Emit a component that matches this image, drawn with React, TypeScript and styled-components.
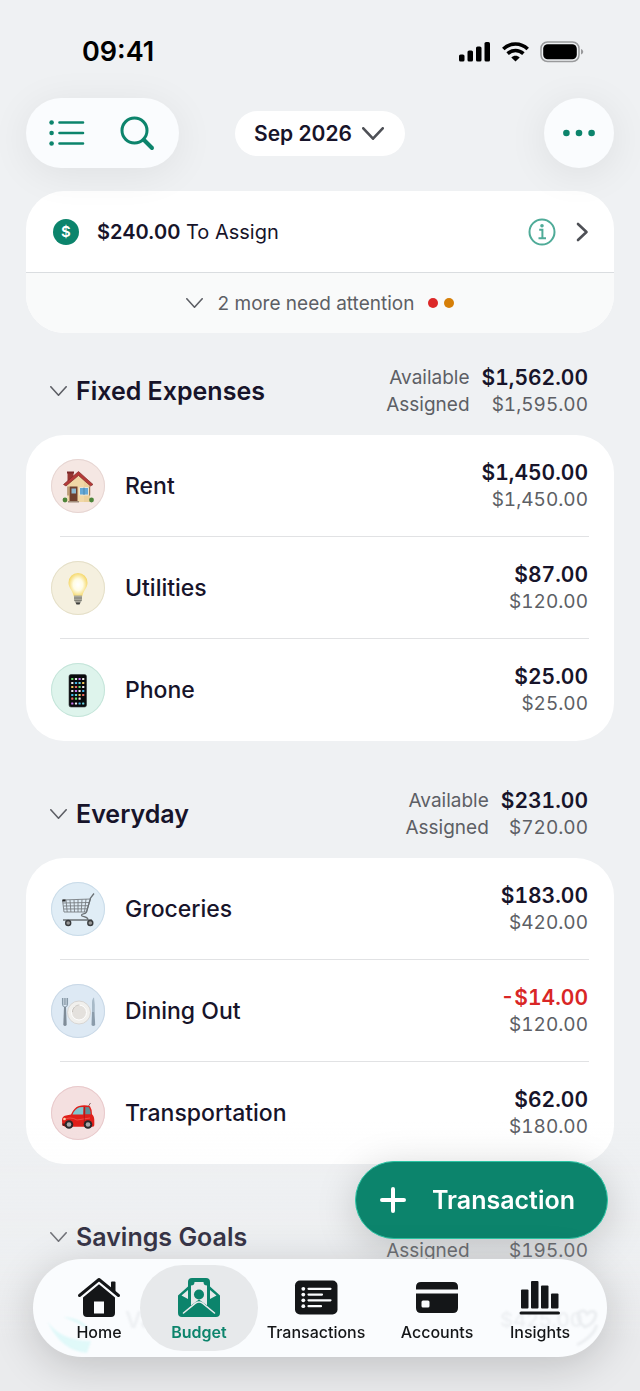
import React, { FC, ReactNode, useState } from "react";
import styled, { createGlobalStyle } from "styled-components";

const GREEN = "#0c846c";
const INK = "#17142a";
const MUTED = "#5d5f65";

const GlobalStyle = createGlobalStyle`
    * {
        box-sizing: border-box;
    }
    body {
        margin: 0;
        background: #eff1f3;
        color: ${INK};
        font-family: Inter, "Liberation Sans", sans-serif;
    }
    button {
        margin: 0;
        padding: 0;
        border: 0;
        background: none;
        color: inherit;
        font: inherit;
        cursor: pointer;
    }
    svg {
        display: block;
        flex: none;
    }
`;

const Page = styled.div`
    min-height: 100vh;
    padding: 0 26px 112px;
    overflow: hidden;
`;

const StatusBar = styled.div`
    display: flex;
    align-items: center;
    justify-content: space-between;
    height: 98px;
    padding: 6px 30px 0 56px;
    color: #000;
    font-size: 27px;
    font-weight: 600;
    line-height: 32px;
`;

const StatusIcons = styled.div`
    display: flex;
    align-items: center;
    gap: 11px;
`;

const Header = styled.header`
    display: grid;
    grid-template-columns: 1fr auto 1fr;
    align-items: center;
`;

const GlassGroup = styled.div`
    display: flex;
    align-items: center;
    justify-content: space-around;
    width: 153px;
    height: 70px;
    padding: 0 6px;
    border-radius: 35px;
    background: #fafcfe;
    color: ${GREEN};
    box-shadow: 0 6px 40px rgba(0, 0, 0, 0.07);
`;

const IconButton = styled.button`
    display: grid;
    place-items: center;
    width: 60px;
    height: 60px;
`;

const MoreButton = styled(IconButton)`
    justify-self: end;
    width: 70px;
    height: 70px;
    border-radius: 50%;
    background: #fafcfe;
    color: ${GREEN};
    box-shadow: 0 6px 40px rgba(0, 0, 0, 0.08);
`;

const MonthButton = styled.button`
    display: flex;
    align-items: center;
    gap: 10px;
    height: 45px;
    padding: 0 21px 0 19px;
    border-radius: 23px;
    background: #fff;
    font-size: 21px;
    font-weight: 600;
    & > svg {
        color: #4e5056;
    }
`;

const Banner = styled.section`
    margin-top: 23px;
    border-radius: 38px;
    background: #fff;
    overflow: hidden;
`;

const AssignRow = styled.div`
    display: flex;
    align-items: center;
    height: 82px;
    padding: 0 25px 0 27px;
    border-bottom: 1px solid #dadde0;
    font-size: 20px;
    & > p {
        flex: 1;
        margin: 0 0 0 18px;
    }
    & b {
        font-weight: 600;
    }
`;

const Coin = styled.span`
    display: grid;
    place-items: center;
    width: 26px;
    height: 26px;
    border-radius: 50%;
    background: ${GREEN};
    color: #fff;
    font-size: 15px;
    font-weight: 600;
`;

const AssignActions = styled.div`
    display: flex;
    align-items: center;
    gap: 20px;
`;

const AttentionButton = styled.button`
    display: flex;
    align-items: center;
    justify-content: center;
    width: 100%;
    height: 60px;
    background: #f9fafa;
    color: ${MUTED};
    font-size: 19px;
    & > span {
        margin: 0 14px 0 15px;
    }
`;

const Dot = styled.i<{ $color: string }>`
    width: 10px;
    height: 10px;
    margin-right: 6px;
    border-radius: 50%;
    background: ${(p) => p.$color};
    &:last-child {
        margin-right: 0;
    }
`;

const Group = styled.section`
    margin-top: 46px;
    &:first-of-type {
        margin-top: 31px;
    }
`;

const GroupHeader = styled.div`
    display: flex;
    align-items: center;
    justify-content: space-between;
    padding: 0 26px 0 24px;
`;

const GroupToggle = styled.button`
    display: flex;
    align-items: center;
    gap: 9px;
    & > svg {
        color: ${MUTED};
    }
`;

const GroupTitle = styled.span`
    font-size: 25px;
    font-weight: 600;
    line-height: 32px;
`;

const Totals = styled.dl`
    display: grid;
    grid-template-columns: auto auto;
    grid-auto-rows: 27px;
    column-gap: 12px;
    margin: 0;
    color: ${MUTED};
    font-size: 19px;
    line-height: 27px;
    text-align: right;
    & dd {
        margin: 0;
        font-variant-numeric: tabular-nums;
    }
`;

const Amount = styled.span<{ $negative?: boolean }>`
    display: block;
    color: ${(p) => (p.$negative ? "#d92626" : INK)};
    font-size: 21px;
    font-weight: 600;
`;

const CategoryList = styled.ul`
    margin: 17px 0 0;
    padding: 0;
    border-radius: 38px;
    background: #fff;
    list-style: none;
`;

const CategoryRow = styled.li`
    display: flex;
    align-items: center;
    height: 102px;
    padding: 0 26px 0 25px;
    &:not(:last-child) {
        background: linear-gradient(#e1e2e4, #e1e2e4) right 25px bottom / calc(100% - 59px) 1px no-repeat;
    }
`;

const Badge = styled.span<{ $fill: string; $edge: string }>`
    width: 54px;
    height: 54px;
    border-radius: 50%;
    background: ${(p) => p.$fill};
    box-shadow: inset 0 0 0 1px ${(p) => p.$edge};
`;

const CategoryName = styled.span`
    flex: 1;
    margin-left: 20px;
    font-size: 23px;
    font-weight: 500;
`;

const Money = styled.div`
    display: flex;
    flex-direction: column;
    align-items: flex-end;
    color: ${MUTED};
    font-size: 19px;
    font-variant-numeric: tabular-nums;
    line-height: 27px;
`;

const Veil = styled.div`
    position: fixed;
    inset: auto 0 0;
    height: 270px;
    background: linear-gradient(rgba(234, 235, 237, 0), rgba(233, 234, 236, 0.18) 50%, #eaebed 80%);
    pointer-events: none;
`;

const AddButton = styled.button`
    position: fixed;
    right: 32px;
    bottom: 152px;
    display: flex;
    align-items: center;
    gap: 26px;
    height: 78px;
    padding: 0 32px 0 24px;
    border: 1px solid #2cc4a4;
    border-radius: 39px;
    background: ${GREEN};
    box-shadow: 0 8px 40px rgba(0, 0, 0, 0.18);
    color: #fff;
    font-size: 25px;
    font-weight: 600;
`;

const TabBar = styled.nav`
    position: fixed;
    inset: auto 33px 34px;
    display: flex;
    align-items: center;
    height: 98px;
    padding: 0 27px 0 25px;
    border-radius: 49px;
    background: #fafcfe;
    box-shadow: 0 8px 44px rgba(0, 0, 0, 0.19);
    overflow: hidden;
`;

const Tab = styled.button<{ $grow: number; $active?: boolean }>`
    position: relative;
    display: flex;
    flex: ${(p) => p.$grow} 1 0;
    flex-direction: column;
    align-items: center;
    gap: 2px;
    min-width: 0;
    height: 86px;
    padding-top: 11px;
    border-radius: 43px;
    background: ${(p) => (p.$active ? "#e7e9eb" : "none")};
    color: ${(p) => (p.$active ? GREEN : "#141618")};
    font-size: 16px;
    font-weight: ${(p) => (p.$active ? 600 : 500)};
    line-height: 24px;
`;

/* row scrolled beneath the tab bar, seen through the glass */
const Underlay = styled.div`
    position: absolute;
    inset: 46px 8px 0 12px;
    display: flex;
    align-items: flex-start;
    color: #8a8f98;
    font-size: 20px;
    font-weight: 600;
    line-height: 30px;
    opacity: 0.1;
    filter: blur(1px);
    & > span {
        flex: 1;
        margin-left: 28px;
        font-size: 23px;
    }
    & > svg:first-child {
        margin-top: 12px;
    }
    & > svg:last-child {
        margin-left: -8px;
    }
`;

type ChevronProps = { width: number; height: number; stroke?: number };

const ChevronDown: FC<ChevronProps> = ({ width, height, stroke = 2 }) => (
    <svg width={width} height={height} viewBox={`0 0 ${width} ${height}`} fill="none" stroke="currentColor" strokeWidth={stroke} strokeLinecap="round" strokeLinejoin="round">
        <path d={`M${stroke / 2} ${stroke / 2}L${width / 2} ${height - stroke / 2}L${width - stroke / 2} ${stroke / 2}`} />
    </svg>
);

const SignalIcon = () => (
    <svg width="32" height="20" viewBox="0 0 32 20">
        <rect x="0" y="12.5" width="5.5" height="7" rx="1.6" />
        <rect x="8.5" y="8.5" width="5.5" height="11" rx="1.6" />
        <rect x="17" y="4.5" width="5.5" height="15" rx="1.6" />
        <rect x="25.5" y="0" width="5.5" height="19.5" rx="1.6" />
    </svg>
);

const WifiIcon = () => (
    <svg width="27" height="20" viewBox="0 0 27 20" fill="none" stroke="#000" strokeWidth="3.6">
        <path d="M1.3 7C8.2 .3 18.8 .3 25.700 7" />
        <path d="M5.600 11.700C10.200 7.500 16.800 7.500 21.400 11.700" />
        <path d="M13.500 19.500L9.300 15.500C11.700 13.300 15.300 13.300 17.700 15.500Z" fill="#000" stroke="none" />
    </svg>
);

const BatteryIcon = () => (
    <svg width="44" height="22" viewBox="0 0 44 22">
        <rect x="1" y="1" width="38" height="19.5" rx="6.5" fill="none" stroke="#999a9c" strokeWidth="1.5" />
        <rect x="3.2" y="3.3" width="33.6" height="15" rx="4.5" />
        <path d="M41 8v5.6c1.3-.5 2.2-1.500 2.200-2.800S42.300 8.500 41 8z" fill="#999a9c" />
    </svg>
);

const ListIcon = () => (
    <svg width="36" height="26" viewBox="0 0 36 26" fill="none" stroke="currentColor" strokeWidth="2.6" strokeLinecap="round">
        <path d="M10.500 2.500h23.500M10.500 13h23.500M10.500 23.500h23.500" />
        <g fill="currentColor" stroke="none">
            <circle cx="2.600" cy="2.500" r="2.300" />
            <circle cx="2.600" cy="13" r="2.300" />
            <circle cx="2.600" cy="23.500" r="2.300" />
        </g>
    </svg>
);

const SearchIcon = () => (
    <svg width="35" height="35" viewBox="0 0 35 35" fill="none" stroke="currentColor" strokeLinecap="round">
        <circle cx="14.500" cy="14.500" r="12.500" strokeWidth="3" />
        <path d="M24 24l8 8" strokeWidth="4" />
    </svg>
);

const MoreIcon = () => (
    <svg width="32" height="8" viewBox="0 0 32 8" fill="currentColor">
        <circle cx="3.400" cy="4" r="3.300" />
        <circle cx="16" cy="4" r="3.300" />
        <circle cx="28.600" cy="4" r="3.300" />
    </svg>
);

const InfoIcon = () => (
    <svg width="28" height="28" viewBox="0 0 28 28" fill="none" stroke="#4fab98" strokeWidth="2">
        <circle cx="14" cy="14" r="12.500" />
        <path d="M11.200 11.800h3.200v8M10.500 20.300h7.500" />
        <circle cx="14" cy="7.800" r="1.800" fill="#4fab98" stroke="none" />
    </svg>
);

const ChevronRight = () => (
    <svg width="13" height="20" viewBox="0 0 13 20" fill="none" stroke="#4e5056" strokeWidth="2.600" strokeLinecap="round" strokeLinejoin="round">
        <path d="M2 2l8.500 8L2 18" />
    </svg>
);

const PlusIcon = () => (
    <svg width="26" height="26" viewBox="0 0 26 26" fill="none" stroke="currentColor" strokeWidth="4" strokeLinecap="round">
        <path d="M13 2v22M2 13h22" />
    </svg>
);

const HouseEmoji = () => (
    <svg width="54" height="54" viewBox="0 0 54 54">
        <path d="M16.500 13h6v9h-6z" fill="#963632" />
        <path d="M16 12.500h7v2h-7z" fill="#7a2829" />
        <path d="M16.500 25L27.500 15L39 25v18h-22.500z" fill="#f1d7a6" />
        <path d="M33 22l6 4v17h-6z" fill="#ecd09c" />
        <path d="M12.500 25.500L27.500 12.500L42 25.500L39.500 27L27.500 16.500L15 27z" fill="#b53a38" stroke="#7f2928" strokeWidth=".7" />
        <path d="M18.500 27.500h8v15.500h-8z" fill="#70402f" />
        <path d="M20.500 29.500h4.500v5h-4.500z" fill="#8eb9d2" />
        <path d="M28.500 28.500h9v7.500h-9z" fill="#65a9d8" stroke="#eee5d1" strokeWidth="1" />
        <path d="M33 28.500v7.500" stroke="#3f789f" strokeWidth=".7" />
        <path d="M38.700 27.500v9M17 27.500v9" stroke="#8f6947" strokeWidth="1" />
        <path d="M17 42h11v1.500H17z" fill="#a08b79" />
        <circle cx="14" cy="41" r="2.400" fill="#4e843a" />
        <circle cx="40.500" cy="41" r="2.400" fill="#4e843a" />
    </svg>
);

const BulbEmoji = () => (
    <svg width="54" height="54" viewBox="0 0 54 54">
        <defs>
            <radialGradient id="bulb" cy=".5">
                <stop offset="0" stopColor="#fff" />
                <stop offset=".5" stopColor="#fffce4" />
                <stop offset="1" stopColor="#f5d96f" />
            </radialGradient>
        </defs>
        <path d="M27 12a9.500 9.500 0 0 1 9.500 9.700c0 5.300-4.200 7.500-5.300 13.800h-8.400c-1.100-6.300-5.300-8.500-5.300-13.800A9.500 9.500 0 0 1 27 12z" fill="url(#bulb)" />
        <path d="M23 34.500h8v5l-2 2.500h-4l-2-2.500z" fill="#a8a79c" />
        <path d="M23 37h8M23.500 39.500h7" stroke="#77766d" strokeWidth=".8" />
        <path d="M24.500 41.500h5l-1 2h-3z" fill="#3d3d3b" />
    </svg>
);

const APP_COLORS = ["#6ee36f", "#eee9ef", "#c879f0", "#efefef", "#45b7ec", "#6ad3df", "#f2c957", "#eb6c63"];

const PhoneEmoji = () => (
    <svg width="54" height="54" viewBox="0 0 54 54">
        <rect x="18" y="11.500" width="17.500" height="32.500" rx="2" fill="#090b0c" stroke="#33383a" strokeWidth=".6" />
        {[16, 20, 24, 28, 32, 35.7, 40.5].map((y, row) =>
            [21.3, 25, 28.6, 32.2].map((x, col) =>
                row === 5 && col === 3 ? null : (
                    <rect key={`${row}-${col}`} x={x - 1.1} y={y - 1.1} width="2.200" height="2.200" rx=".5" fill={APP_COLORS[(row * 3 + col) % 8]} />
                )
            )
        )}
    </svg>
);

const CartEmoji = () => (
    <svg width="54" height="54" viewBox="0 0 54 54" fill="none" stroke="#777d81" strokeWidth=".9">
        <path d="M11.500 18L39.500 17L35.500 30L13 30z" />
        <path d="M12 21l26.500-.5M12.500 24l25-.3M13 27l23.500-.2" />
        <path d="M15 18l1.200 12M19 18l.9 12M23 18l.5 12M27 17.500v12.500M31 17.500l-.8 12.500M35 17l-1.500 13" />
        <path d="M43 11.500l-3.500 4.500l-4 14c-1 3-5 1-5 3.200c0 2 6 1 6.500 4.300M12 38h29" strokeWidth="1.300" stroke="#6b7175" />
        <path d="M11.500 17.500h3v2h-3z" fill="#222" stroke="none" />
        <circle cx="17.200" cy="41" r="2.500" fill="#999" stroke="#393c3e" strokeWidth="1.400" />
        <circle cx="39.300" cy="41" r="2.500" fill="#999" stroke="#393c3e" strokeWidth="1.400" />
    </svg>
);

const PlateEmoji = () => (
    <svg width="54" height="54" viewBox="0 0 54 54">
        <circle cx="28" cy="28.500" r="11.500" fill="#f1f0ed" stroke="#d0cecb" strokeWidth=".8" />
        <circle cx="28" cy="28.500" r="7.500" fill="#e4e1dd" stroke="#fff" strokeWidth="1" />
        <path d="M21.500 28c0-4 3-7 7-7" fill="none" stroke="#bbb6b0" strokeWidth=".8" />
        <path d="M11.500 14v6q0 2.500 2 3h1q2-.5 2-3v-6M13.200 14v7M14.900 14v7" fill="none" stroke="#8799a7" strokeWidth="1.100" />
        <path d="M13 23h2l.7 18q-1.700 2-3.400 0z" fill="#7f8c98" />
        <path d="M41 28V18q.5-4 2-4.500q1.200 8 .8 14.500z" fill="#a8bac8" />
        <path d="M41 28h2.500l.7 13q-1.900 2-3.700 0z" fill="#8b9cab" />
    </svg>
);

const CarEmoji = () => (
    <svg width="54" height="54" viewBox="0 0 54 54">
        <path d="M37.500 20l2-3" stroke="#6a4948" strokeWidth=".8" />
        <path d="M11 35q-.3-5 4-5.500l5-1q3-7 8-8.500q6-1.500 11 .3q2 3 2 8q2.500 2 2.300 7v4q-.3 1.500-2 1.500H14q-3-1-3-5.800z" fill="#e01f1a" />
        <path d="M21.500 28.500q2.500-6 7-7.200l4-.3l-.3 7.500z" fill="#7fc7d0" />
        <path d="M34.300 21l3.700.3q1.500 3 1.800 7h-5.500z" fill="#5c9097" />
        <path d="M12 34q7-4 14 0l13-2" fill="none" stroke="#f2625a" strokeWidth=".7" />
        <path d="M33.300 21v16" stroke="#9f1715" strokeWidth=".7" />
        <circle cx="13.500" cy="33" r="1.300" fill="#ffd1aa" />
        <path d="M11 37.500h4v2.500h-3.300z" fill="#741412" />
        <circle cx="18" cy="38.500" r="4.300" fill="#282729" />
        <circle cx="18" cy="38.500" r="2.300" fill="#aaa8aa" />
        <circle cx="37" cy="38.500" r="4.300" fill="#282729" />
        <circle cx="37" cy="38.500" r="2.300" fill="#aaa8aa" />
    </svg>
);

const HomeTabIcon = () => (
    <svg width="44" height="42" viewBox="0 0 44 42" fill="currentColor">
        <path d="M34 6.500q0-1 1-1h2.500q1 0 1 1v10l-4.500-3.700z" />
        <path d="M2.500 19.500L22 3.500L41.500 19.500" fill="none" stroke="currentColor" strokeWidth="3" strokeLinecap="round" strokeLinejoin="round" />
        <path fillRule="evenodd" d="M22 8.200L38 21.500V37q0 4-4 4H10q-4 0-4-4V21.500zM17 25.500V37.500h10V25.500z" />
    </svg>
);

const BudgetTabIcon = () => (
    <svg width="44" height="42" viewBox="0 0 44 42" fill="currentColor">
        <path d="M1 19.500L11 10.500V6q0-4 4-4h14q4 0 4 4v4.500l10 9V37q0 4-4 4H5q-4 0-4-4z" />
        <path d="M14 29.500V9.500q3.500 0 3.500-3.500h9q0 3.500 3.500 3.500v20L22 23.500z" fill="#e7e9eb" />
        <circle cx="22" cy="18.500" r="5" />
        <path d="M14 29.500l8-4.500l8 4.500v5H14z" />
        <path d="M4.500 19.500L11 14v9zM39.500 19.500L33 14v9z" fill="#e7e9eb" />
        <path d="M6.500 37L18.500 27.200q3.500-2.500 7 0L37.500 37" fill="none" stroke="#e7e9eb" strokeWidth="1.600" strokeLinecap="round" />
    </svg>
);

const TransactionsTabIcon = () => (
    <svg width="44" height="42" viewBox="0 0 44 42" fill="none">
        <rect x="1" y="4.500" width="42.500" height="34" rx="5" fill="currentColor" />
        <path d="M14.500 12.800h22M14.500 18.600h13.500M14.500 24.300h22M14.500 30.200h12.500" stroke="#fafcfe" strokeWidth="2.200" strokeLinecap="round" />
        <g fill="#fafcfe">
            <circle cx="9.300" cy="12.800" r="1.900" />
            <circle cx="9.300" cy="18.600" r="1.900" />
            <circle cx="9.300" cy="24.300" r="1.900" />
            <circle cx="9.300" cy="30.200" r="1.900" />
        </g>
    </svg>
);

const AccountsTabIcon = () => (
    <svg width="44" height="42" viewBox="0 0 44 42" fill="currentColor">
        <path d="M1 13.500V11q0-5 5-5h32q5 0 5 5v2.500z" />
        <path fillRule="evenodd" d="M1 17.500h42V32q0 5-5 5H6q-5 0-5-5zM8 24.500q-1.500 0-1.500 1.500v4q0 1.500 1.500 1.500h5q1.500 0 1.500-1.500v-4q0-1.500-1.500-1.500z" />
    </svg>
);

const InsightsTabIcon = () => (
    <svg width="44" height="42" viewBox="0 0 44 42" fill="currentColor">
        <rect x="3" y="13.500" width="7.500" height="19" rx="1" />
        <rect x="13" y="5" width="7.500" height="27.500" rx="1" />
        <rect x="23" y="9.500" width="7.500" height="23" rx="1" />
        <rect x="33" y="17.500" width="7.500" height="15" rx="1" />
        <rect x="1.500" y="35.500" width="40.500" height="3" rx="1.500" />
    </svg>
);

interface Category {
    name: string;
    available: string;
    assigned: string;
    fill: string;
    edge: string;
    icon: ReactNode;
    negative?: boolean;
}

interface CategoryGroup {
    name: string;
    available: string;
    assigned: string;
    items: Category[];
}

const groups: CategoryGroup[] = [
    {
        name: "Fixed Expenses",
        available: "$1,562.00",
        assigned: "$1,595.00",
        items: [
            { name: "Rent", available: "$1,450.00", assigned: "$1,450.00", fill: "#f5e7e3", edge: "#e6d5d2", icon: <HouseEmoji /> },
            { name: "Utilities", available: "$87.00", assigned: "$120.00", fill: "#f5f0df", edge: "#e4dfc8", icon: <BulbEmoji /> },
            { name: "Phone", available: "$25.00", assigned: "$25.00", fill: "#def4ec", edge: "#c4e4d9", icon: <PhoneEmoji /> },
        ],
    },
    {
        name: "Everyday",
        available: "$231.00",
        assigned: "$720.00",
        items: [
            { name: "Groceries", available: "$183.00", assigned: "$420.00", fill: "#e0edf6", edge: "#c9dbe8", icon: <CartEmoji /> },
            { name: "Dining Out", available: "-$14.00", assigned: "$120.00", fill: "#dde9f4", edge: "#c9d8e6", icon: <PlateEmoji />, negative: true },
            { name: "Transportation", available: "$62.00", assigned: "$180.00", fill: "#f4e0e0", edge: "#e8c9cb", icon: <CarEmoji /> },
        ],
    },
    { name: "Savings Goals", available: "$1,425.00", assigned: "$195.00", items: [] },
];

const tabs = [
    { label: "Home", grow: 82, icon: <HomeTabIcon /> },
    { label: "Budget", grow: 118, icon: <BudgetTabIcon /> },
    { label: "Transactions", grow: 116, icon: <TransactionsTabIcon /> },
    { label: "Accounts", grow: 126, icon: <AccountsTabIcon /> },
    { label: "Insights", grow: 80, icon: <InsightsTabIcon /> },
];

const BudgetGroup: FC<{ group: CategoryGroup }> = ({ group }) => {
    const [open, setOpen] = useState(true);

    return (
        <Group>
            <GroupHeader>
                <GroupToggle aria-expanded={open} onClick={() => setOpen(!open)}>
                    <ChevronDown width={17} height={10} stroke={1.6} />
                    <GroupTitle>{group.name}</GroupTitle>
                </GroupToggle>
                <Totals>
                    <dt>Available</dt>
                    <dd><Amount>{group.available}</Amount></dd>
                    <dt>Assigned</dt>
                    <dd>{group.assigned}</dd>
                </Totals>
            </GroupHeader>
            {open && group.items.length > 0 && (
                <CategoryList>
                    {group.items.map((item) => (
                        <CategoryRow key={item.name}>
                            <Badge $fill={item.fill} $edge={item.edge}>{item.icon}</Badge>
                            <CategoryName>{item.name}</CategoryName>
                            <Money>
                                <Amount $negative={item.negative}>{item.available}</Amount>
                                <span>{item.assigned}</span>
                            </Money>
                        </CategoryRow>
                    ))}
                </CategoryList>
            )}
        </Group>
    );
};

const App: FC = () => {
    const [activeTab, setActiveTab] = useState("Budget");

    return (
        <>
            <GlobalStyle />
            <Page>
                <StatusBar>
                    <span>09:41</span>
                    <StatusIcons>
                        <SignalIcon />
                        <WifiIcon />
                        <BatteryIcon />
                    </StatusIcons>
                </StatusBar>
                <Header>
                    <GlassGroup>
                        <IconButton aria-label="Categories"><ListIcon /></IconButton>
                        <IconButton aria-label="Search"><SearchIcon /></IconButton>
                    </GlassGroup>
                    <MonthButton>
                        Sep 2026
                        <ChevronDown width={22} height={13} stroke={2.6} />
                    </MonthButton>
                    <MoreButton aria-label="More"><MoreIcon /></MoreButton>
                </Header>
                <Banner>
                    <AssignRow>
                        <Coin>$</Coin>
                        <p><b>$240.00</b> To Assign</p>
                        <AssignActions>
                            <button aria-label="About assigning"><InfoIcon /></button>
                            <button aria-label="Assign"><ChevronRight /></button>
                        </AssignActions>
                    </AssignRow>
                    <AttentionButton>
                        <ChevronDown width={17} height={10} stroke={1.6} />
                        <span>2 more need attention</span>
                        <Dot $color="#dc2828" />
                        <Dot $color="#d67f08" />
                    </AttentionButton>
                </Banner>
                <main>
                    {groups.map((group) => (
                        <BudgetGroup key={group.name} group={group} />
                    ))}
                </main>
            </Page>
            <Veil />
            <AddButton>
                <PlusIcon />
                Transaction
            </AddButton>
            <TabBar>
                <Underlay aria-hidden="true">
                    <svg width="52" height="40" viewBox="0 0 52 40" fill="#00dcd0">
                        <path d="M2 4Q16 24 46 24L42 36Q16 34 2 4zM18 0Q36 0 46 14Q30 4 18 0z" />
                    </svg>
                    <span>Va</span>
                    $425.00
                    <svg width="24" height="44" viewBox="0 0 24 44" fill="none" stroke="#6f7780" strokeWidth="3">
                        <path d="M3 8Q9 3 12 9Q19 3 21 10Q19 19 10 22Q2 17 3 8zM22 20Q18 32 2 40" />
                    </svg>
                </Underlay>
                {tabs.map((tab) => (
                    <Tab key={tab.label} $grow={tab.grow} $active={tab.label === activeTab} onClick={() => setActiveTab(tab.label)}>
                        {tab.icon}
                        {tab.label}
                    </Tab>
                ))}
            </TabBar>
        </>
    );
};

export default App;
